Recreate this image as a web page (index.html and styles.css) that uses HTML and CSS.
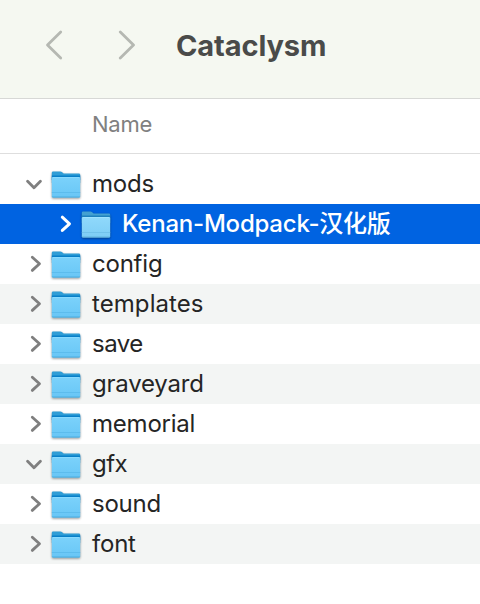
FILE: index.html
```
<!DOCTYPE html>
<html lang="en">
<head>
<meta charset="utf-8">
<title>Cataclysm</title>
<link rel="stylesheet" href="styles.css">
</head>
<body>
<svg class="defs" aria-hidden="true">
  <defs>
    <linearGradient id="front" x1="0" y1="0" x2="0" y2="1">
      <stop offset="0" stop-color="#7bd2fb"/>
      <stop offset="1" stop-color="#68c6f6"/>
    </linearGradient>
    <symbol id="folder" viewBox="0 0 30 28">
      <path fill="#2f9dd6" d="M.8 1.8Q.8 .5 2.1 .5H9.3Q10.4 .5 11.2 1.3L12 2Q12.6 2.5 13.5 2.5H27.9Q29.2 2.5 29.2 3.8V12H.8Z"/>
      <path fill="#087fc8" d="M.8 4.5H29.2V9H.8Z"/>
      <path fill="url(#front)" d="M.8 7Q.8 6 1.8 6H28.2Q29.2 6 29.2 7V25.3Q29.2 26.5 28 26.5H2Q.8 26.5 .8 25.3Z"/>
      <path fill="#8edcff" d="M2 6H28V6.8H2Z"/>
      <path fill="#58b9ea" d="M.8 21.2H29.2V22H.8Z"/>
      <path fill="#4caedf" d="M.9 25.5H29.1Q28.9 26.5 28 26.5H2Q1.1 26.5 .9 25.5Z"/>
    </symbol>
    <symbol id="right" viewBox="0 0 16 20"><path d="M6.3 3.2 13.5 9.8 6.3 16.4"/></symbol>
    <symbol id="down" viewBox="0 0 16 20"><path d="M1.6 7.2 8 13.8 14.4 7.2"/></symbol>
  </defs>
</svg>
<header class="toolbar">
  <svg class="nav" viewBox="0 0 18 30"><path d="M15.7 2 2.5 15 15.7 28"/></svg>
  <svg class="nav nav-next" viewBox="0 0 18 30"><path d="M3.3 2 16.5 15 3.3 28"/></svg>
  <h1 class="title">Cataclysm</h1>
</header>
<div class="columns"><span class="column">Name</span></div>
<main class="list">
  <div class="row"><svg class="chevron"><use href="#down"/></svg><svg class="folder"><use href="#folder"/></svg><span class="name">mods</span></div>
  <div class="row selected"><svg class="chevron"><use href="#right"/></svg><svg class="folder"><use href="#folder"/></svg><span class="name">Kenan-Modpack-汉化版</span></div>
  <div class="row"><svg class="chevron"><use href="#right"/></svg><svg class="folder"><use href="#folder"/></svg><span class="name">config</span></div>
  <div class="row"><svg class="chevron"><use href="#right"/></svg><svg class="folder"><use href="#folder"/></svg><span class="name wide">templates</span></div>
  <div class="row"><svg class="chevron"><use href="#right"/></svg><svg class="folder"><use href="#folder"/></svg><span class="name tight">save</span></div>
  <div class="row"><svg class="chevron"><use href="#right"/></svg><svg class="folder"><use href="#folder"/></svg><span class="name">graveyard</span></div>
  <div class="row"><svg class="chevron"><use href="#right"/></svg><svg class="folder"><use href="#folder"/></svg><span class="name">memorial</span></div>
  <div class="row"><svg class="chevron"><use href="#down"/></svg><svg class="folder"><use href="#folder"/></svg><span class="name tight">gfx</span></div>
  <div class="row"><svg class="chevron"><use href="#right"/></svg><svg class="folder"><use href="#folder"/></svg><span class="name">sound</span></div>
  <div class="row"><svg class="chevron"><use href="#right"/></svg><svg class="folder"><use href="#folder"/></svg><span class="name">font</span></div>
</main>
</body>
</html>
```
FILE: styles.css
```
* { box-sizing: border-box; }
body {
  margin: 0;
  height: 604px;
  overflow: hidden;
  background: #fff;
  color: #252525;
  font-family: Inter, "Noto Sans CJK SC", sans-serif;
}
.defs {
  position: absolute;
  width: 0;
  height: 0;
}
.toolbar {
  display: flex;
  align-items: center;
  height: 99px;
  padding: 0 0 9px 45px;
  background: #f5f8f1;
  border-bottom: 1px solid #d7d8d6;
}
.nav {
  width: 18px;
  height: 30px;
  fill: none;
  stroke: #b5b8b2;
  stroke-width: 2.8;
  stroke-linecap: round;
  stroke-linejoin: round;
}
.nav-next { margin-left: 54px; }
.title {
  margin: 2px 0 0 41px;
  font-size: 29px;
  line-height: 36px;
  font-weight: 700;
  letter-spacing: -0.1px;
  color: #4a4b49;
}
.columns {
  display: flex;
  align-items: center;
  height: 55px;
  padding: 0 0 4px 92px;
  border-bottom: 1px solid #dedede;
}
.column {
  font-size: 22px;
  line-height: 28px;
  letter-spacing: -0.25px;
  color: #808080;
}
.list { padding-top: 10px; }
.row {
  display: flex;
  align-items: center;
  height: 40px;
  padding-left: 26px;
}
.row:nth-child(even) { background: #f3f5f4; }
.chevron {
  width: 16px;
  height: 20px;
  fill: none;
  stroke: #7f7f7f;
  stroke-width: 2.8;
  stroke-linecap: round;
  stroke-linejoin: round;
}
.folder {
  width: 30px;
  height: 28px;
  margin: 2px 0 0 9px;
  filter: drop-shadow(0 1px 1px rgba(0, 0, 0, .4));
}
.name {
  margin-left: 11px;
  font-size: 24px;
  line-height: 32px;
  letter-spacing: -0.22px;
  white-space: nowrap;
}
.name.wide { letter-spacing: 0.08px; }
.name.tight { letter-spacing: -0.5px; }
.row.selected {
  padding-left: 56px;
  background: #0063e1;
  color: #fff;
}
.selected .chevron {
  stroke: #fff;
  stroke-width: 3;
}
.selected .folder { filter: drop-shadow(0 1px 1px rgba(0, 0, 0, .4)) saturate(.8) brightness(1.05); }
.selected .name { font-weight: 500; }
```
